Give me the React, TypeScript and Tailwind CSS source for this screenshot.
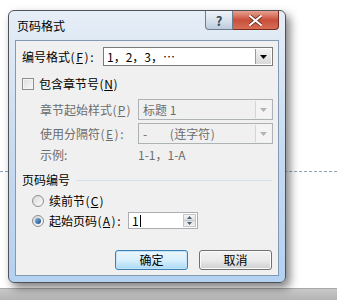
import React from "react";

const font = "font-['Noto_Sans_CJK_SC','Noto_Sans',sans-serif]";

// ascii glyphs laid out on fixed cells, like the dialog's bitmap font
const A = ({ t, u, w = "w-[5px]" }: { t: string; u?: boolean; w?: string }) => (
  <span className={`inline-block ${w} text-center ${u ? "underline underline-offset-1" : ""}`}>{t}</span>
);

const Mn = ({ c, colon }: { c: string; colon?: boolean }) => (
  <span className="inline-flex items-center">
    <A t="(" />
    <A t={c} u w="w-[9px]" />
    <A t=")" />
    {colon && <A t=":" w="w-[6px]" />}
  </span>
);

const DropArrow = ({ disabled }: { disabled?: boolean }) => (
  <div
    className={`w-[16px] h-full flex items-center justify-center border-l ${
      disabled
        ? "border-[#d5d5d5] bg-[#f4f4f4]"
        : "border-[#9a9a9a] bg-gradient-to-b from-[#f3f3f3] to-[#d8d8d8]"
    }`}
  >
    <svg width="7" height="4" viewBox="0 0 7 4">
      <path d="M0 0h7L3.5 4z" fill={disabled ? "#b3b3b3" : "#000"} />
    </svg>
  </div>
);

const Select = ({ value, disabled }: { value: React.ReactNode; disabled?: boolean }) => (
  <div
    className={`flex h-[21px] w-[135px] border ${
      disabled ? "border-[#adb2b5] bg-[#f0f0f0] text-[#6d6d6d]" : "border-[#7a7a7a] bg-white"
    }`}
  >
    <div className="flex-1 flex items-center pl-[4px] text-[12px] leading-none">{value}</div>
    <div className="p-[1px] h-full">
      <DropArrow disabled={disabled} />
    </div>
  </div>
);

const Radio = ({ checked }: { checked?: boolean }) => (
  <div className="w-[12px] h-[12px] rounded-full border border-[#8e8f8f] bg-gradient-to-br from-[#d8d8d8] to-[#fbfbfb] flex items-center justify-center">
    {checked && (
      <div className="w-[6px] h-[6px] rounded-full bg-gradient-to-br from-[#7fb8e6] to-[#1c4f86]" />
    )}
  </div>
);

const Btn = ({ label, def }: { label: string; def?: boolean }) => (
  <div
    className={`w-[73px] h-[20px] rounded-[3px] border flex items-center justify-center text-[12px] leading-none ${
      def
        ? "border-[#3c7fb1] bg-gradient-to-b from-[#eaf6fd] via-[#d9f0fc] to-[#a7d9f5] shadow-[inset_0_0_0_1px_#c3e4f6]"
        : "border-[#707070] bg-gradient-to-b from-[#f2f2f2] via-[#ebebeb] to-[#cfcfcf] shadow-[inset_0_0_0_1px_#fcfcfc]"
    }`}
  >
    {label}
  </div>
);

export default function App() {
  return (
    <div className={`relative w-[337px] h-[300px] bg-white overflow-hidden ${font} text-black`}>
      <div className="h-[171px]" />
      <div className="border-t border-dashed border-[#8fa3b8] w-full" />
      <div className="h-[116px]" />
      <div className="h-[12px] bg-gradient-to-b from-[#c9c9c9] to-[#b3b3b3] border-t border-[#a8a8a8]" />

      {/* dialog */}
      <div className="absolute left-[8px] top-[10px] w-[278px] h-[273px] rounded-[6px] border border-[#4f5358] bg-gradient-to-b from-[#e6eef7] via-[#c8dbf0] to-[#b4d1f1] shadow-[4px_5px_10px_rgba(0,0,0,0.5)] flex flex-col">
        <div className="h-[29px] flex items-start">
          <div className="pl-[8px] pt-[9px] text-[12px] leading-none text-black">页码格式</div>
          <div className="ml-auto mr-[6px] flex">
            <div className="w-[28px] h-[19px] rounded-bl-[4px] border border-t-0 border-[#6d7d8f] bg-gradient-to-b from-[#eef3f8] via-[#d9e3ee] to-[#bccbdc] flex items-center justify-center text-[#3a4b60] text-[13px] font-bold leading-none">
              ?
            </div>
            <div className="w-[46px] h-[19px] rounded-br-[4px] border border-t-0 border-l-0 border-[#7a2a20] bg-gradient-to-b from-[#e7a18f] via-[#c94f3c] to-[#d56e55] flex items-center justify-center">
              <svg width="13" height="11" viewBox="0 0 13 11">
                <path d="M1 1l11 9M12 1L1 10" stroke="#5a2219" strokeWidth="3.4" strokeLinecap="square" />
                <path d="M1 1l11 9M12 1L1 10" stroke="#fff" strokeWidth="2" strokeLinecap="square" />
              </svg>
            </div>
          </div>
        </div>

        {/* client */}
        <div className="mx-[6px] h-[236px] border border-[#8199b4] bg-[#f0f0f0] flex flex-col text-[12px] leading-none">
          <div className="mt-[6px] h-[19px] flex items-center pl-[6px]">
            <div className="w-[81px] flex items-center">
              编号格式<Mn c="F" colon />
            </div>
            <div className="flex h-[19px] w-[170px] border border-[#7a7a7a] bg-white">
              <div className="flex-1 flex items-center pl-[3px]">1，2，3，⋯</div>
              <div className="p-[1px] h-full">
                <DropArrow />
              </div>
            </div>
          </div>

          <div className="mt-[11px] h-[14px] flex items-center pl-[6px] gap-[5px]">
            <div className="w-[12px] h-[12px] border border-[#8e8f8f] bg-gradient-to-br from-[#dcdcdc] to-[#fafafa] shadow-[inset_0_0_0_1px_#f4f4f4]" />
            <div className="flex items-center">
              包含章节号<Mn c="N" />
            </div>
          </div>

          <div className="mt-[8px] flex items-center pl-[24px] text-[#6d6d6d]">
            <div className="w-[98px] flex items-center">
              章节起始样式<Mn c="P" />
            </div>
            <Select value="标题 1" disabled />
          </div>

          <div className="mt-[3px] flex items-center pl-[24px] text-[#6d6d6d]">
            <div className="w-[98px] flex items-center">
              使用分隔符<Mn c="E" colon />
            </div>
            <Select
              value={
                <span className="flex items-center">
                  -<span className="ml-[22px] flex items-center"><A t="(" />连字符<A t=")" /></span>
                </span>
              }
              disabled
            />
          </div>

          <div className="mt-[4px] h-[14px] flex items-center pl-[24px] text-[#6d6d6d]">
            <div className="w-[98px]">示例:</div>
            <div>1-1，1-A</div>
          </div>

          <div className="mt-[11px] h-[14px] flex items-center pl-[6px] pr-[6px] gap-[6px]">
            <div>页码编号</div>
            <div className="flex-1 border-t border-[#d5dfe5]" />
          </div>

          <div className="mt-[7px] h-[14px] flex items-center pl-[16px] gap-[5px]">
            <Radio />
            <div className="flex items-center">
              续前节<Mn c="C" />
            </div>
          </div>

          <div className="mt-[4px] h-[17px] flex items-center pl-[16px]">
            <Radio checked />
            <div className="ml-[5px] w-[79px] flex items-center">
              起始页码<Mn c="A" colon />
            </div>
            <div className="flex h-[17px] w-[70px] border border-[#abadb3] bg-white">
              <div className="flex-1 flex items-center pl-[3px]">
                1<span className="ml-[1px] w-[1px] h-[12px] bg-black" />
              </div>
              <div className="w-[15px] h-full p-[1px] flex flex-col">
                <div className="flex-1 border border-[#c3c7cc] bg-gradient-to-b from-[#f5f5f5] to-[#e2e2e2] flex items-center justify-center">
                  <svg width="5" height="3" viewBox="0 0 5 3">
                    <path d="M0 3h5L2.5 0z" fill="#4b5d74" />
                  </svg>
                </div>
                <div className="flex-1 border border-t-0 border-[#c3c7cc] bg-gradient-to-b from-[#e2e2e2] to-[#f0f0f0] flex items-center justify-center">
                  <svg width="5" height="3" viewBox="0 0 5 3">
                    <path d="M0 0h5L2.5 3z" fill="#4b5d74" />
                  </svg>
                </div>
              </div>
            </div>
          </div>

          <div className="mt-[21px] flex justify-end gap-[11px] pr-[6px]">
            <Btn label="确定" def />
            <Btn label="取消" />
          </div>
        </div>
      </div>
    </div>
  );
}
